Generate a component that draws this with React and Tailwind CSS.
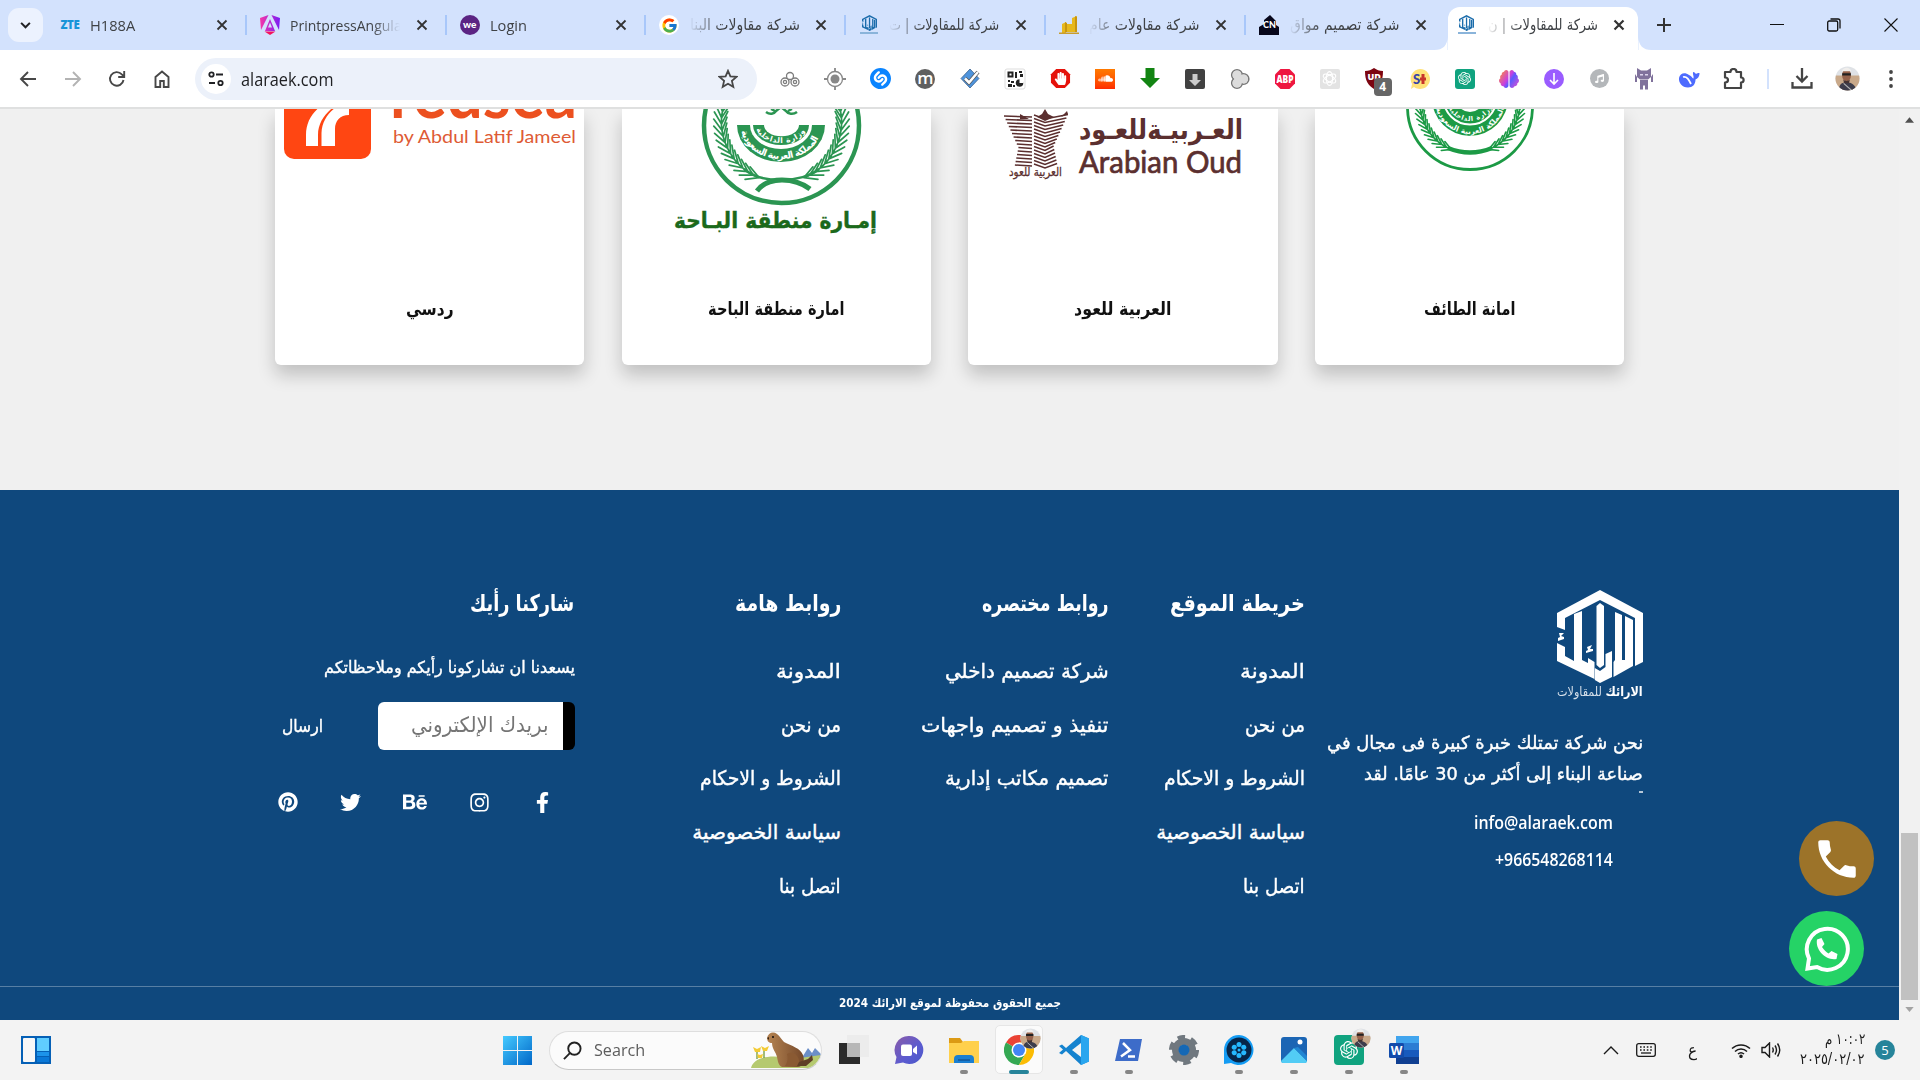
import React, { useLayoutEffect, useRef, useState } from "react";
import {
  FaFacebookF, FaInstagram, FaBehance, FaTwitter, FaPinterest,
  FaSoundcloud, FaHandPaper, FaMusic, FaBrain,
} from "react-icons/fa";
import { SiOpenai, SiShazam } from "react-icons/si";
import { FcGoogle } from "react-icons/fc";
import { MdPhone } from "react-icons/md";

/* One line of text squeezed or stretched to the width of its box. */
function Fit({ className = "", children, rtl = false }) {
  const outer = useRef(null);
  const inner = useRef(null);
  const [scale, setScale] = useState(1);
  useLayoutEffect(() => {
    const natural = inner.current.offsetWidth;
    if (natural) setScale(outer.current.clientWidth / natural);
  }, [children]);
  return (
    <div ref={outer} dir={rtl ? "rtl" : "ltr"} className={"shrink-0 whitespace-nowrap " + className}>
      <span
        ref={inner}
        className={rtl ? "inline-block origin-right" : "inline-block origin-left"}
        style={{ transform: `scaleX(${scale})` }}
      >
        {children}
      </span>
    </div>
  );
}

/* ---------- Brand mark ---------- */
function Hexagon({ className, viewBox = "0 0 86 93" }) {
  return (
    <svg viewBox={viewBox} className={className} fill="currentColor" preserveAspectRatio="none">
      <path d="M0 37V23L43 0l43 23v49l-8 4V28L43 10 8 28v12z" />
      <path d="M0 53l8 4v9l9 5V24l8-3v49l6 3v-5l6.500 4v17L0 71z" />
      <path d="M39.500 16l3.500-3 4 3v59l-4 3-3.500-3z" />
      <path d="M58 22l7 3v45h3V26l8 4v46l-19.500 11V72l1.500-2z" />
      <path d="M48.500 64l6.500-3v26l-12 6-5.200-3V78l5.200 3 5.500-4z" />
      <path d="M2 43h5l-3 3 3 1v2l-6 2v-3l2-1zM30 57l5-2-2 4 3 0v2l-7 2v-2l2-1z" />
    </svg>
  );
}

function BrandIcon() {
  return (
    <div className="flex h-5 w-5 flex-col items-center text-[#1b6cab]">
      <Hexagon className="h-[16px] w-[15px]" />
      <div className="mt-[1px] h-[2px] w-[18px] bg-[#8ab4da]" />
    </div>
  );
}

const X = ({ bold }) => (
  <svg viewBox="0 0 12 12" className="h-[12px] w-[12px]" stroke="#333" strokeWidth={bold ? 2.200 : 1.800}>
    <path d="M1.500 1.500l9 9M10.500 1.500l-9 9" />
  </svg>
);

const tabs = [
  { title: "H188A", width: "w-[45px]", icon: <span className="font-['Open_Sans'] text-[11.5px] font-extrabold tracking-[-0.3px] text-[#1794d8]">ZTE</span> },
  {
    title: "PrintpressAngula", width: "w-[112px]", fade: true,
    icon: (
      <svg viewBox="0 0 20 20" className="h-5 w-5">
        <defs><linearGradient id="ang" x1="0" x2="1"><stop offset="0" stopColor="#f637a8" /><stop offset="1" stopColor="#7a1df5" /></linearGradient></defs>
        <path d="M11.500 0L20 3l-1 12zM8.500 0L0 3l1 12zM10 4l5 12H5z" fill="url(#ang)" />
        <path d="M10 7.500l2 5H8z" fill="#d3e3fd" /><path d="M4.500 16.500h11L10 20z" fill="#f4125e" />
      </svg>
    ),
  },
  { title: "Login", width: "w-[37px]", icon: <div className="flex h-5 w-5 items-center justify-center rounded-full bg-[#5b2483] pb-[2px] font-['Lato'] text-[10px] font-black leading-none text-white">we</div> },
  { title: "شركة مقاولات البنا", ar: true, width: "w-[110px]", fade: true, icon: <div className="flex h-5 w-5 items-center justify-center rounded-full bg-white"><FcGoogle size={17} /></div> },
  { title: "شركة للمقاولات | ت", ar: true, width: "w-[110px]", fade: true, icon: <BrandIcon /> },
  {
    title: "شركة مقاولات عام", ar: true, width: "w-[110px]", fade: true,
    icon: (
      <svg viewBox="0 0 20 20" className="h-5 w-5">
        <path d="M3 9l4-2v11H3zM7 9h6v8H7zM13 3l5-2v16h-5z" fill="#e7b81d" /><path d="M6 7l2 1v9H6zM16 1l2 1v15h-2z" fill="#c8950f" /><path d="M0 17.500h20v1.500H0z" fill="#c99d2c" />
      </svg>
    ),
  },
  {
    title: "شركة تصميم مواق", ar: true, width: "w-[109px]", fade: true,
    icon: (
      <svg viewBox="0 0 20 20" className="h-5 w-5"><path d="M0 20v-8l5-3V5l6-5 6 6v4l3 2v8z" fill="#07071b" /><text x="4" y="12.500" fontFamily="Lato" fontWeight="900" fontSize="9" fill="#fff">CN</text></svg>
    ),
  },
];

function TabTitle({ t }) {
  const mask = !t.fade ? "" : t.ar
    ? "[mask-image:linear-gradient(to_right,transparent,black_32px)]"
    : "[mask-image:linear-gradient(to_left,transparent,black_28px)]";
  return (
    <div className={"ml-[10px] flex w-[111px] overflow-hidden " + (t.ar ? "justify-end " : "") + mask}>
      <Fit rtl={t.ar} className={t.width + (t.ar ? " font-['DejaVu_Sans',sans-serif] text-[15.5px]" : " font-['Open_Sans',sans-serif] text-[15px]") + " leading-[24px] text-[#3f4246]"}>{t.title}</Fit>
    </div>
  );
}

function TabStrip() {
  return (
    <div className="flex h-[50px] shrink-0 items-center bg-[#d3e2fd]">
      <div className="ml-[8px] flex h-[34px] w-[35px] shrink-0 items-center justify-center rounded-[11px] bg-[#ecf2fe]">
        <svg viewBox="0 0 12 8" className="h-[7px] w-[11px]" fill="none" stroke="#202124" strokeWidth="2.300"><path d="M1 1l5 5 5-5" /></svg>
      </div>
      <div className="ml-[4px] flex">
        {tabs.map((t, i) => (
          <div key={i} className="flex h-[24px] w-[199.8px] items-center pl-[13px]">
            <div className="flex w-5 shrink-0 justify-center">{t.icon}</div>
            <TabTitle t={t} />
            <div className="ml-[15.5px] shrink-0"><X /></div>
            {i < 6 && <div className="ml-[17px] h-5 w-[2px] shrink-0 bg-[#a8c7fa]" />}
          </div>
        ))}
      </div>
      <div className="ml-[-12px] flex h-full items-end pt-[7px]">
        <svg viewBox="0 0 14 14" className="h-[13px] w-[14px]"><path d="M14 0v14H0C9 14 14 9 14 0z" fill="#fff" /></svg>
        <div className="flex h-[43px] w-[190px] items-center rounded-t-[12px] bg-white pb-[7px] pl-[9px]">
          <BrandIcon />
          <TabTitle t={{ title: "شركة للمقاولات | ن", ar: true, fade: true, width: "w-[110px]" }} />
          <div className="ml-[15px]"><X bold /></div>
        </div>
        <svg viewBox="0 0 14 14" className="h-[13px] w-[14px]"><path d="M0 0v14h14C5 14 0 9 0 0z" fill="#fff" /></svg>
      </div>
      <svg viewBox="0 0 14 14" className="ml-[5px] h-[14px] w-[14px]" stroke="#333" strokeWidth="2"><path d="M7 0v14M0 7h14" /></svg>
      <div className="ml-auto flex items-center gap-[43px] pr-[22px]">
        <svg viewBox="0 0 14 14" className="h-[14px] w-[14px]" stroke="#111"><path d="M0 6.500h14" /></svg>
        <svg viewBox="0 0 14 14" className="h-[14px] w-[14px]" fill="none" stroke="#111" strokeWidth="1.300"><rect x=".7" y="3" width="10" height="10" rx="1.500" /><path d="M3.500 1h7.500a2 2 0 0 1 2 2v7.500" /></svg>
        <svg viewBox="0 0 14 14" className="h-[14px] w-[14px]" stroke="#111" strokeWidth="1.100"><path d="M.5 .5l13 13M13.500 .5l-13 13" /></svg>
      </div>
    </div>
  );
}

/* ---------- Toolbar ---------- */
const S = ({ children, vb = "0 0 22 22", c = "h-[22px] w-[22px]" }) => (
  <svg viewBox={vb} className={c} fill="none">{children}</svg>
);
const OCT = "M6.500 1h9L21 6.500v9L15.500 21h-9L1 15.500v-9z";

const extensions = [
  <S><g stroke="#7d7d7d" strokeWidth="1.300"><circle cx="11" cy="8" r="3.500" /><circle cx="6" cy="14" r="4" /><circle cx="16" cy="14" r="4" /><circle cx="6" cy="14" r="1.600" /><circle cx="16" cy="14" r="1.600" /></g></S>,
  <S><circle cx="11" cy="11" r="7.500" stroke="#888" strokeWidth="1.300" /><circle cx="11" cy="11" r="4.500" fill="#888" /><path d="M11 0v4M11 18v4M0 11h4M18 11h4" stroke="#888" strokeWidth="1.800" /></S>,
  <SiShazam size={21} color="#0a84ff" />,
  <div className="flex h-5 w-5 items-center justify-center rounded-full bg-[#5f5f5f] pb-[3px] font-['Open_Sans'] text-[17px] font-semibold leading-none text-white">m</div>,
  <S><path d="M11 1l9 9.500L11 20 2 10.500z" fill="#4f94dc" stroke="#38618e" strokeWidth=".8" /><path d="M6 10.500l4 4L19 4" stroke="#555" strokeWidth="4" /><path d="M6 10.500l4 4L19 4" stroke="#fff" strokeWidth="2.600" /></S>,
  <S><rect x="1" y="1" width="20" height="20" rx="2" fill="#fff" stroke="#ddd" /><g fill="#222"><path d="M3.500 3.500h6v6h-6zM11 4h2v6h-2zM15 3h3v2h-3zM16 6h3v3h-3zM4 12h2v2H4zM7 13h3v2H7zM4 16h4v3H4zM9 17h2v2H9z" /><circle cx="15.500" cy="15" r="3.800" /></g><path d="M5.500 5.500h2v2h-2z" fill="#fff" /><path d="M15.500 15v-4h4v4z" fill="#fff" /></S>,
  <div className="relative h-[21px] w-[21px]"><S c="h-[21px] w-[21px]"><path d={OCT} fill="#e5120b" /></S><FaHandPaper className="absolute left-[4px] top-[4px]" size={13} color="#fff" /></div>,
  <div className="flex h-5 w-5 items-center justify-center bg-linear-to-b from-[#ff7a00] to-[#ff2a00]"><FaSoundcloud color="#fff" size={15} /></div>,
  <S><path d="M6.500 0h9v10H21L11 20 1 10h5.500z" fill="#128412" /></S>,
  <S><rect x="1" y="1" width="20" height="20" rx="2" fill="#414141" /><path d="M8.500 6h5v6H17l-6 6-6-6h3.500z" fill="#ccc" /></S>,
  <S><g fill="#e4e4e4" stroke="#777" strokeWidth="1.600"><circle cx="8" cy="7" r="5.300" /><circle cx="14.500" cy="11" r="5.300" /><circle cx="8" cy="15" r="5.300" /></g><g fill="#dcdcdc"><circle cx="8" cy="7" r="4.600" /><circle cx="14.500" cy="11" r="4.600" /><circle cx="8" cy="15" r="4.600" /></g></S>,
  <S><path d={OCT} fill="#ee1740" /><text x="2.500" y="14.500" textLength="17" lengthAdjust="spacingAndGlyphs" fontFamily="Open Sans" fontWeight="800" fontSize="10" fill="#fff">ABP</text></S>,
  <div className="flex h-5 w-5 items-center justify-center rounded-[2px] bg-[#e3e3e3]"><S c="h-[17px] w-[17px]"><g stroke="#fff" strokeWidth="1.600"><ellipse cx="11" cy="11" rx="4" ry="9" /><ellipse cx="11" cy="11" rx="4" ry="9" transform="rotate(60 11 11)" /><ellipse cx="11" cy="11" rx="4" ry="9" transform="rotate(120 11 11)" /></g></S></div>,
  <div className="relative h-[22px] w-[22px]">
    <S><path d="M1 3c4 0 6-1 9-3 3 2 5 3 9 3 0 10-3 14-9 18C4 17 1 13 1 3z" fill="#7c0510" /><text x="3.500" y="12" fontFamily="Open Sans" fontWeight="800" fontSize="9" fill="#fff">UD</text></S>
    <div className="absolute left-[10px] top-[10px] flex h-[18px] w-[18px] items-center justify-center rounded-[4px] bg-[#666] font-['Open_Sans'] text-[12px] font-bold leading-none text-white">4</div>
  </div>,
  <S><path d="M11 1a10 10 0 1 1-6 18l-3 2 1-5A10 10 0 0 1 11 1z" fill="#ffe27a" /><text x="4" y="15.500" fontFamily="Lato" fontWeight="900" fontSize="13" fill="#3742a8">S</text><path d="M12.500 6h3v10h-3zM11 9.500h6v3h-6z" fill="#c8342b" /></S>,
  <div className="flex h-5 w-5 items-center justify-center rounded-[3px] bg-[#10a37f]"><SiOpenai color="#fff" size={13} /></div>,
  <div className="relative"><svg className="absolute h-0 w-0"><linearGradient id="brain" gradientUnits="userSpaceOnUse" x1="0" y1="60" x2="576" y2="460"><stop offset="0" stopColor="#ff8a3c" /><stop offset=".45" stopColor="#c83fe0" /><stop offset=".6" stopColor="#5a5bff" /><stop offset="1" stopColor="#e04fd0" /></linearGradient></svg><FaBrain size={20} className="fill-[url(#brain)]" /></div>,
  <S><circle cx="11" cy="11" r="10" fill="#9a5cff" /><path d="M11 5v11M7 12l4 4 4-4" stroke="#fff" strokeWidth="1.600" /></S>,
  <div className="flex h-[19px] w-[19px] items-center justify-center rounded-full bg-[#b4b7ba]"><FaMusic color="#fff" size={9} /></div>,
  <S><path d="M4 0l4 2.500h6L18 0v9l-3 2.500H7L4 9zM7 12h8v9.500h-3v-4h-2v4H7zM2 6l2 3v5H2zM20 6l-2 3v5h2z" fill="#80729c" /><path d="M7 6h3v1.500H7zM12 6h3v1.500h-3z" fill="#dcd4ec" /></S>,
  <S><path d="M1 10c1-5 6-6 10-3 3 1 3 3 4.500 3.500C16 8 14.500 6.500 15 4c1.500 0 2.500 1.500 3 2 1-1 2-1 3.500-1 0 4-2 5.500-4 6.500 0 5-3 8-7.500 8-6 0-9.500-5-9-9.500z" fill="#4d6bfe" /><path d="M5 9c4-1 6 3 8 7" stroke="#fff" strokeWidth="1.800" /></S>,
  <S><path d="M2 4h5.500c0-4 6-4 6 0H18v5.500c3.500 0 3.500 5 0 5V20H2v-5.500c4 0 4-5 0-5z" stroke="#444" strokeWidth="2.200" strokeLinejoin="round" /></S>,
];

function Avatar({ className }) {
  return (
    <svg viewBox="0 0 26 26" className={className}>
      <defs><clipPath id="av"><circle cx="13" cy="13" r="12.500" /></clipPath></defs>
      <g clipPath="url(#av)">
        <path d="M0 0h26v26H0z" fill="#dfe2e6" /><path d="M0 10h26v16H0z" fill="#c9a98a" /><path d="M4 26c0-7 3-9 8-9s10 3 10 9z" fill="#3d3d4c" />
        <ellipse cx="12" cy="9.500" rx="4.600" ry="6.500" fill="#96624b" /><path d="M7 5.500c1-5 9-5 10 0z" fill="#f0eeec" /><path d="M7.500 7.500h9V10h-9z" fill="#222" /><path d="M8.500 14c2 2 5 2 7 0l-1 4h-5z" fill="#433" />
        <path d="M9 18l9 8" stroke="#b5b5b5" strokeWidth="1.200" />
      </g>
    </svg>
  );
}

function Toolbar() {
  return (
    <div className="flex h-[59px] shrink-0 items-center border-b-2 border-[#dfe0e0] bg-white">
      <div className="ml-[19px] flex w-[152px] items-center justify-between">
        <S c="h-[18px] w-[18px]" vb="0 0 18 18"><path d="M17 9H2M9 2L2 9l7 7" stroke="#474747" strokeWidth="1.900" /></S>
        <S c="h-[18px] w-[18px]" vb="0 0 18 18"><path d="M1 9h15M9 2l7 7-7 7" stroke="#b3b3b3" strokeWidth="1.900" /></S>
        <S c="h-[18px] w-[18px]" vb="0 0 18 18"><path d="M15.500 10A6.800 6.800 0 1 1 13.800 4.300L16 6.500M16.200 1v6h-6" stroke="#474747" strokeWidth="1.900" /></S>
        <S c="h-[18px] w-[18px]" vb="0 0 18 18"><path d="M2.500 17V7L9 1.500 15.500 7v10h-4.700v-6H7.200v6z" stroke="#474747" strokeWidth="1.900" /></S>
      </div>
      <div className="ml-[24px] flex h-[42px] w-[562px] items-center rounded-full bg-[#ecf1fa] pl-[6px] pr-[19px]">
        <div className="flex h-[30px] w-[30px] items-center justify-center rounded-full bg-white">
          <S vb="0 0 16 16" c="h-[16px] w-[16px]"><g stroke="#202124" strokeWidth="1.800"><circle cx="3.500" cy="3.500" r="2.200" /><path d="M8 3.500h7M1 12h6" /><circle cx="12.500" cy="12" r="2.200" /></g></S>
        </div>
        <Fit className="ml-[10px] w-[92px] font-['Open_Sans',sans-serif] text-[17.5px] leading-[24px] text-[#202124]">alaraek.com</Fit>
        <S vb="0 0 20 20" c="ml-auto h-[20px] w-[20px]"><path d="M10 1.800l2.400 5.600 6.100.5-4.600 4 1.400 6L10 14.800l-5.300 3.100 1.400-6-4.600-4 6.100-.5z" stroke="#474747" strokeWidth="1.800" /></S>
      </div>
      <div className="ml-[11px] flex items-center">
        {extensions.map((e, i) => <div key={i} className="flex w-[44.95px] shrink-0 items-center justify-center">{e}</div>)}
      </div>
      <div className="ml-[10px] h-[20px] w-[2px] bg-[#d3e2fd]" />
      <S c="ml-[22px] h-[22px] w-[22px]"><path d="M11 0v13M5.500 8l5.500 5.500L16.500 8M1.500 14v5.500h19V14" stroke="#444" strokeWidth="2.300" /></S>
      <Avatar className="ml-[22px] h-[25px] w-[25px]" />
      <S vb="0 0 4 18" c="ml-[29px] h-[18px] w-[4px]"><g fill="#444"><circle cx="2" cy="2" r="1.900" /><circle cx="2" cy="9" r="1.900" /><circle cx="2" cy="16" r="1.900" /></g></S>
    </div>
  );
}

/* ---------- Client logos ---------- */
const AR = "'DejaVu Sans', sans-serif";

function Wreath({ cx, cy, r, leaf, from, to, step, color, width }) {
  const items = [];
  for (let a = from; a <= to; a += step) {
    const t = (a * Math.PI) / 180;
    const x = cx + r * Math.cos(t);
    const y = cy + r * Math.sin(t);
    for (const s of [-0.5, 0.5]) {
      const d = t + Math.PI / 2 + s;
      items.push(`M${x.toFixed(1)} ${y.toFixed(1)}L${(x + leaf * Math.cos(d)).toFixed(1)} ${(y + leaf * Math.sin(d)).toFixed(1)}`);
    }
  }
  const p = (a) => [cx + r * Math.cos((a * Math.PI) / 180), cy + r * Math.sin((a * Math.PI) / 180)];
  const [x0, y0] = p(from);
  const [x1, y1] = p(to);
  const d = items.join("") + `M${x0} ${y0}A${r} ${r} 0 0 1 ${x1} ${y1}`;
  return (
    <g stroke={color} strokeWidth={width} fill="none" strokeLinecap="round">
      <path d={d} />
      <path d={d} transform={`translate(${2 * cx} 0) scale(-1 1)`} />
    </g>
  );
}

const RedseaLogo = () => (
  <svg viewBox="0 0 309 140" className="h-[140px] w-[309px]">
    <rect x="9" y="-40" width="87" height="90" rx="10" fill="#ff4612" />
    <path d="M31 37V26C31 12 38 2 50-6h14C52 2 43 12 43 26v11z" fill="#fff" />
    <path d="M46.500 37V24C47 10 56 0 68-6h6V6c-9 0-14 6-14 14v17z" fill="#fff" />
    <text x="115" y="9" textLength="187" lengthAdjust="spacingAndGlyphs" fontFamily="Lato" fontWeight="700" fontSize="68" fill="#ec501f">redsea</text>
    <text x="118" y="34" textLength="183" lengthAdjust="spacingAndGlyphs" fontFamily="Lato" fontSize="17" fill="#de5b35">by Abdul Latif Jameel</text>
  </svg>
);

const BahaLogo = () => {
  const g = "#2b9552";
  return (
    <svg viewBox="0 0 309 140" className="h-[140px] w-[309px]">
      <circle cx="159.500" cy="16.500" r="77.500" fill="none" stroke={g} strokeWidth="4.500" />
      <Wreath cx={159.500} cy={13} r={60} leaf={14} from={112} to={200} step={6} color={g} width={1.700} />
      <path d="M115 16h88a44 37 0 0 1-88 0z" fill={g} />
      <path d="M128 16h62a31 24 0 0 1-62 0z" fill="#fff" />
      <path d="M131 16h56a28 20 0 0 1-56 0z" fill={g} />
      <path d="M142 16h35a17 11 0 0 1-35 0z" fill="#fff" />
      <defs><path id="b1" d="M119 18a40 32 0 0 0 80 0" /><path id="b2" d="M134 17a25 17 0 0 0 50 0" /></defs>
      <text fontFamily={AR} fontWeight="700" fontSize="9.500" fill="#fff"><textPath href="#b1" startOffset="4" textLength="98">المملكة العربية السعودية</textPath></text>
      <text fontFamily={AR} fontWeight="700" fontSize="7.500" fill="#fff"><textPath href="#b2" startOffset="3" textLength="58">وزارة الداخلية</textPath></text>
      <path d="M122 60c8 7 22 11 37 11s30-4 38-11" fill="none" stroke={g} strokeWidth="2.500" />
      <path d="M135 82c5-7 14-11 25-11s20 3 28 9" fill="none" stroke={g} strokeWidth="5" />
      <path d="M144 3c4 3 8 2 10-1l5-4 5 4c2 3 7 4 11 1M149 0l4 2M170 0l-4 2" stroke={g} strokeWidth="2.500" fill="none" />
      <text x="52" y="119" textLength="203" lengthAdjust="spacingAndGlyphs" fontFamily={AR} fontWeight="700" fontSize="22" fill="#1b691b" stroke="#1b691b" strokeWidth=".4">إمـارة منطقة البـاحة</text>
    </svg>
  );
};

const OudLogo = () => {
  const c = "#5b2f2f";
  const stripes = [];
  for (let i = 0; i < 15; i++) {
    const y = 7 + i * 3.500;
    const pinch = i < 9 ? i * 1.600 : 14.400 - (i - 9) * 0.700;
    stripes.push(`M${36 + pinch} ${y}L64 ${y + 1}M66 ${y - 1}L77 ${y + 3}L${100 - pinch} ${y - 1.500}`);
  }
  return (
    <svg viewBox="0 0 309 140" className="h-[140px] w-[309px]">
      <path d={stripes.join("")} stroke={c} strokeWidth="1.600" fill="none" />
      <path d="M69 8l5-3 3-5 3 5 6 3-9 4zM52 5l9 5h-9zM93 8l6-6 1 3z" fill={c} />
      <text x="41" y="67" textLength="53" lengthAdjust="spacingAndGlyphs" fontFamily={AR} fontSize="12" fill={c} stroke={c} strokeWidth=".3">العربية للعود</text>
      <text x="111" y="30" textLength="164" lengthAdjust="spacingAndGlyphs" fontFamily={AR} fontWeight="700" fontSize="27" fill={c}>العـربيـةللعـود</text>
      <text x="111" y="64" textLength="163" lengthAdjust="spacingAndGlyphs" fontFamily="Lato" fontWeight="400" fontSize="30" fill={c} stroke={c} strokeWidth=".7">Arabian Oud</text>
    </svg>
  );
};

const TaifLogo = () => {
  const g = "#1c9a45";
  return (
    <svg viewBox="0 0 309 140" className="h-[140px] w-[309px]">
      <circle cx="155" cy="-2" r="62.500" fill="none" stroke={g} strokeWidth="2.800" />
      <Wreath cx={155} cy={-6} r={50} leaf={10} from={112} to={200} step={6} color={g} width={1.600} />
      <path d="M133 39q22 9 44 0" fill="none" stroke={g} strokeWidth="4.500" />
      <circle cx="155" cy="-11" r="38" fill={g} />
      <circle cx="155" cy="-11" r="26.500" fill="none" stroke="#fff" strokeWidth="2" />
      <circle cx="155" cy="-11" r="14" fill="#fff" />
      <defs><path id="t1" d="M120-9a35 34 0 0 0 70 0" /><path id="t2" d="M132-9a23 21 0 0 0 46 0" /></defs>
      <text fontFamily={AR} fontWeight="700" fontSize="7.500" fill="#fff"><textPath href="#t1" startOffset="8" textLength="92">المملكة العربية السعودية</textPath></text>
      <text fontFamily={AR} fontWeight="700" fontSize="6.500" fill="#fff"><textPath href="#t2" startOffset="8" textLength="54">وزارة الداخلية</textPath></text>
    </svg>
  );
};

const clients = [
  { logo: <RedseaLogo />, name: "ردسي", w: "w-[48px]" },
  { logo: <BahaLogo />, name: "امارة منطقة الباحة", w: "w-[136px]" },
  { logo: <OudLogo />, name: "العربية للعود", w: "w-[97px]" },
  { logo: <TaifLogo />, name: "امانة الطائف", w: "w-[91px]" },
];

/* ---------- Footer ---------- */
const shared = [
  ["المدونة", "w-[65px]"],
  ["من نحن", "w-[60px]"],
  ["الشروط و الاحكام", "w-[141px]"],
  ["سياسة الخصوصية", "w-[149px]"],
  ["اتصل بنا", "w-[62px]"],
];
const short = [
  ["شركة تصميم داخلي", "w-[164px]"],
  ["تنفيذ و تصميم واجهات", "w-[188px]"],
  ["تصميم مكاتب إدارية", "w-[164px]"],
];

function LinkColumn({ title, titleWidth, links, className }) {
  return (
    <div dir="rtl" className={"shrink-0 " + className}>
      <Fit rtl className={"font-['DejaVu_Sans',sans-serif] text-[23px] font-bold leading-[36px] " + titleWidth}>{title}</Fit>
      <ul className="mt-[23px]">
        {links.map(([label, w]) => (
          <li key={label} className="flex h-[53.8px] items-center">
            <Fit rtl className={"font-['DejaVu_Sans',sans-serif] text-[20px] leading-[30px] [-webkit-text-stroke:0.4px_white] " + w}>{label}</Fit>
          </li>
        ))}
      </ul>
    </div>
  );
}

function Footer() {
  return (
    <footer className="flex h-[530px] flex-col bg-[#0f487d] text-white">
      <div className="flex h-[496px] pl-[277px] pt-[95px]">
        <div dir="rtl" className="w-[297.5px] shrink-0">
          <Fit rtl className="w-[104px] font-['DejaVu_Sans',sans-serif] text-[23px] font-bold leading-[36px]">شاركنا رأيك</Fit>
          <Fit rtl className="mt-[33px] w-[251px] font-['DejaVu_Sans',sans-serif] text-[16.5px] leading-[28px] [-webkit-text-stroke:0.4px_white]">يسعدنا ان تشاركونا رأيكم وملاحظاتكم</Fit>
          <div className="mt-[20px] flex items-center">
            <div className="flex h-[48px] w-[197px] items-center rounded-[6px] border-r-[12px] border-black bg-white pb-[2px] pr-[14px]">
              <Fit rtl className="w-[138px] font-['DejaVu_Sans',sans-serif] text-[21px] leading-[36px] text-[#757575]">بريدك الإلكتروني</Fit>
            </div>
            <Fit rtl className="mr-[54px] w-[41px] font-['DejaVu_Sans',sans-serif] text-[17.5px] leading-[30px] [-webkit-text-stroke:0.4px_white]">ارسال</Fit>
          </div>
          <div className="mt-[40px] flex w-[298px] items-center justify-between pr-[21px]">
            <div className="flex w-[22px] justify-center"><FaFacebookF size={21} /></div>
            <div className="flex w-[22px] justify-center"><FaInstagram size={21} /></div>
            <div className="flex w-[24px] justify-center"><FaBehance size={24} /></div>
            <div className="flex w-[22px] justify-center"><FaTwitter size={21} /></div>
            <div className="flex w-[22px] justify-center"><FaPinterest size={20} /></div>
          </div>
        </div>
        <LinkColumn title="روابط هامة" titleWidth="w-[106px]" links={shared} className="w-[266.500px]" />
        <LinkColumn title="روابط مختصره" titleWidth="w-[126px]" links={short} className="w-[267.500px]" />
        <LinkColumn title="خريطة الموقع" titleWidth="w-[135px]" links={shared} className="w-[196.500px]" />
        <div dir="rtl" className="w-[338px] shrink-0">
          <Hexagon className="mt-[5px] h-[93px] w-[86px]" />
          <Fit rtl className="mt-[1px] w-[86px] font-['DejaVu_Sans',sans-serif] text-[12.5px] leading-[16px] text-[#d5dfe9]"><b className="text-white">الارائك</b> للمقاولات</Fit>
          <div className="mt-[27px] h-[67px] overflow-hidden font-['DejaVu_Sans',sans-serif] text-[18px] leading-[31px] [-webkit-text-stroke:0.4px_white]">
            <Fit rtl className="w-[316px]">نحن شركة تمتلك خبرة كبيرة فى مجال في</Fit>
            <Fit rtl className="w-[279px]">صناعة البناء إلى أكثر من 30 عامًا. لقد</Fit>
            <div className="mt-[2px] h-[2px] w-[4px] bg-white/70" />
          </div>
          <div className="mt-[13px] pr-[30px]">
            <Fit className="mb-[7px] w-[139px] font-['Open_Sans',sans-serif] text-[18px] font-semibold leading-[30px]">info@alaraek.com</Fit>
            <Fit className="w-[118px] font-['Open_Sans',sans-serif] text-[18px] font-semibold leading-[30px]">+966548268114</Fit>
          </div>
        </div>
      </div>
      <div className="flex h-[34px] items-center justify-center border-t border-white/30 pb-[2px]">
        <Fit rtl className="w-[222px] font-['DejaVu_Sans',sans-serif] text-[12px] font-bold leading-[20px]">جميع الحقوق محفوظة لموقع الارائك 2024</Fit>
      </div>
    </footer>
  );
}

function Page() {
  return (
    <div className="flex h-[911px] shrink-0 bg-[#f1f1f1]">
      <main className="relative w-[1899px] shrink-0">
        <div className="flex h-[381px] gap-[37.5px] overflow-hidden bg-[#f0f0f0] pl-[275px]">
          {clients.map((c) => (
            <div key={c.name} className="flex h-[256px] w-[309.2px] shrink-0 flex-col items-center rounded-b-[6px] bg-white shadow-[0_10px_18px_rgba(0,0,0,0.2)]">
              {c.logo}
              <Fit rtl className={"mt-[46px] font-['DejaVu_Sans',sans-serif] text-[18px] font-bold leading-[28px] text-[#111] " + c.w}>{c.name}</Fit>
            </div>
          ))}
        </div>
        <Footer />
        <div className="absolute left-[1799px] top-[712px] flex h-[75px] w-[75px] items-center justify-center rounded-full bg-[#9c7329]">
          <MdPhone size={50} color="#fff" />
        </div>
        <div className="absolute left-[1789px] top-[802px] flex h-[75px] w-[75px] items-center justify-center rounded-full bg-[#25d366]">
          <svg viewBox="0 0 46 46" className="h-[46px] w-[46px]">
            <path d="M3.500 42.500l1.500-10A20.500 20.500 0 1 1 13 41z" fill="none" stroke="#fff" strokeWidth="4" />
            <path d="M13 13.500l4.500-1.500 3 6-2.500 3c2 3 4 5 6.500 6.500l3-2.500 6 3-1 5C22 35 11 24 13 13.500z" fill="#fff" />
          </svg>
        </div>
      </main>
      <div className="flex w-[21px] flex-col items-center pt-[8px]">
        <svg viewBox="0 0 10 6" className="h-[6px] w-[9px]"><path d="M5 0l5 6H0z" fill="#505050" /></svg>
        <div className="mt-[710px] h-[167px] w-[17px] shrink-0 bg-[#c1c1c1]" />
        <svg viewBox="0 0 10 6" className="mt-[7px] h-[5px] w-[9px]"><path d="M5 6l5-6H0z" fill="#a3a3a3" /></svg>
      </div>
    </div>
  );
}

/* ---------- Taskbar ---------- */
const I = ({ children }) => <svg viewBox="0 0 30 30" className="h-[30px] w-[30px]">{children}</svg>;

const apps = [
  { icon: <I><path d="M0 8h21v21H0z" fill="#2b2b2b" /><path d="M8 0h22v22H8z" fill="#ececec" /><path d="M8 8h13v14H8z" fill="#b7b7b7" /></I> },
  { icon: <I><defs><linearGradient id="chat" x1="0" y1="0" x2="1" y2="1"><stop offset="0" stopColor="#8a5ba8" /><stop offset=".6" stopColor="#5b5bd0" /><stop offset="1" stopColor="#4a57c8" /></linearGradient></defs><path d="M15 1a14 14 0 1 1-6 26.500L1 29l1.500-7A14 14 0 0 1 15 1z" fill="url(#chat)" /><rect x="7" y="9.500" width="11" height="11.500" rx="2" fill="#fff" /><path d="M19 14l4-3.500v9L19 17z" fill="#fff" /></I> },
  { dot: true, icon: <I><path d="M0 3h11l3 4h15v6H0z" fill="#dc9a14" /><path d="M0 8h12l3-2h15v22H0z" fill="#ffd04c" /><path d="M5 28v-4a4 4 0 0 1 4-4h12a4 4 0 0 1 4 4v4z" fill="#1b7fd1" /><path d="M9 24h12v2H9z" fill="#1560a6" /></I> },
  {
    active: true,
    icon: (
      <div className="relative h-[30px] w-[30px]">
        <I><circle cx="15" cy="15" r="15" fill="#fff" /><path d="M15 15L2 7.500A15 15 0 0 1 28 7.500H15z" fill="#ea4335" /><path d="M15 15L2 7.500A15 15 0 0 0 15 30l6.500-11.200z" fill="#34a853" /><path d="M15 7.500h13A15 15 0 0 1 15 30l6.500-11.200z" fill="#fbbc04" /><circle cx="15" cy="15" r="7.500" fill="#fff" /><circle cx="15" cy="15" r="6" fill="#4285f4" /></I>
        <Avatar className="absolute left-[16px] top-[-7px] h-[21px] w-[21px]" />
      </div>
    ),
  },
  { dot: true, icon: <I><path d="M22 0l8 3.500v23L22 30 7 16l-4 3.500L0 18l4-3.500L0 11l3-1.500L7 13z" fill="#1583cf" /><path d="M22 8v14l-9-7z" fill="#f3f3f3" /><path d="M22 0l8 3.500v23L22 30z" fill="#29a6ef" /></I> },
  { dot: true, icon: <I><path d="M6 4h22l-4 22H1z" fill="#3d6cc9" /><path d="M9 8l7 7-9 6.500" stroke="#fff" strokeWidth="2.500" fill="none" /><path d="M14 21.500h7" stroke="#fff" strokeWidth="2.500" /></I> },
  { icon: <I><circle cx="15" cy="15" r="8.500" fill="none" stroke="#70787f" strokeWidth="7" /><circle cx="15" cy="15" r="12.800" fill="none" stroke="#70787f" strokeWidth="4.500" strokeDasharray="7.400 6" /><circle cx="15" cy="15" r="5.500" fill="#1568b5" /></I> },
  { dot: true, icon: <I><path d="M15 0a15 15 0 1 1-8 28L0 29V15A15 15 0 0 1 15 0z" fill="#149cf4" /><circle cx="15" cy="15" r="12.500" fill="#06264a" />{[0, 60, 120, 180, 240, 300].map((a) => <circle key={a} cx="15" cy="9.500" r="2.500" fill="#25b8ff" transform={`rotate(${a} 15 15)`} />)}<circle cx="15" cy="15" r="1.500" fill="#25b8ff" /></I> },
  { dot: true, icon: <I><rect x="2" y="2" width="26" height="26" rx="3" fill="#1b65b4" /><path d="M2 26l13-13 13 13q0 2-3 2H5q-3 0-3-2z" fill="#52ccf5" /><path d="M15 13l13 13v-5L19 12z" fill="#1f86d3" /><circle cx="21" cy="7" r="2.500" fill="#fff" /></I> },
  {
    dot: true,
    icon: (
      <div className="relative flex h-[30px] w-[30px] items-center justify-center rounded-[4px] bg-[#10a37f]">
        <SiOpenai color="#fff" size={18} />
        <Avatar className="absolute left-[17px] top-[-7px] h-[20px] w-[20px]" />
      </div>
    ),
  },
  { dot: true, icon: <I><rect x="7" y="1" width="23" height="28" rx="2" fill="#2b7cd3" /><path d="M7 1h23v7H7z" fill="#41a5ee" /><path d="M7 22h23v7H7z" fill="#103f91" /><path d="M7 15h23v7H7z" fill="#185abd" /><rect x="0" y="8" width="15" height="15" rx="1.500" fill="#124bab" /><text x="1.700" y="20" fontFamily="Open Sans" fontWeight="700" fontSize="12" fill="#fff">W</text></I> },
];

function Groundhog() {
  return (
    <svg viewBox="0 0 70 36" className="h-[36px] w-[70px]">
      <defs><linearGradient id="fur" x1="0" x2="1"><stop offset="0" stopColor="#b58452" /><stop offset="1" stopColor="#76492a" /></linearGradient></defs>
      <path d="M52 24l5-8 4 5 3-5 6 6v5H52z" fill="#6c8fc8" />
      <path d="M0 36c3-12 22-14 42-9l28-4v13z" fill="#b5c96f" />
      <path d="M16 6c1-5 6-7 10-4 3 2 4 5 7 8 8 4 16 6 19 13 2 6 0 11-5 12H31c-4-2-4-6-5-10-1-5-5-8-5-14-3 0-5-2-5-5z" fill="url(#fur)" />
      <path d="M36 22c6-4 14 2 12 12H34c3-4 3-8 2-12z" fill="#8a5a33" /><path d="M48 30l9-3 4-4 1 5-7 6h-9z" fill="#5f3f27" />
      <circle cx="22" cy="5" r="1.100" fill="#1c1410" /><path d="M16 6l2-1v3z" fill="#3a2417" />
      <path d="M6 27v-7M13 26v-7" stroke="#6f9a3a" strokeWidth="1.300" />
      <path d="M2 15l4 2 4-2-1 5H4zM10 14l4 2 4-2-2 5h-4zM6 22l3 1 3-1-1 4H7z" fill="#f3cb35" />
    </svg>
  );
}

function Taskbar() {
  return (
    <div className="flex h-[60px] shrink-0 items-center bg-[#f3f3f3]">
      <svg viewBox="0 0 30 28" className="ml-[21px] h-[28px] w-[30px]">
        <path d="M0 0h30v28H0z" fill="#0560b6" /><rect x="2" y="2" width="12" height="24" rx="1" fill="#f7f7f7" /><path d="M16 2h12v13H16z" fill="#60cdff" /><path d="M16 16h12v4H16z" fill="#1c93ea" /><path d="M16 21h12v5H16z" fill="#0a78d7" />
      </svg>
      <svg viewBox="0 0 29 29" className="ml-[452px] h-[29px] w-[29px]">
        <defs><linearGradient id="win" x1="0" y1="0" x2="1" y2="1"><stop offset="0" stopColor="#45caff" /><stop offset="1" stopColor="#0067c8" /></linearGradient></defs>
        <path d="M0 0h14v14H0zM15 0h14v14H15zM0 15h14v14H0zM15 15h14v14H15z" fill="url(#win)" />
      </svg>
      <div className="ml-[17px] flex h-[39px] w-[273px] items-center overflow-hidden rounded-full border border-[#dedede] border-b-[#c8c8c8] bg-[#fbfbfb]">
        <svg viewBox="0 0 20 20" className="ml-[13px] h-[19px] w-[19px]" fill="none" stroke="#222" strokeWidth="2"><circle cx="12" cy="8" r="6.500" /><path d="M7.500 12.500L1 19" /></svg>
        <Fit className="ml-[12px] w-[51px] font-['Open_Sans',sans-serif] text-[16.5px] leading-[24px] text-[#5d5d5d]">Search</Fit>
        <div className="ml-auto"><Groundhog /></div>
      </div>
      <div className="ml-[4.500px] flex">
        {apps.map((a, i) => (
          <div key={i} className="flex h-[60px] w-[55px] flex-col items-center pt-[5px]">
            <div className={"flex h-[49px] w-[48px] items-center justify-center rounded-[5px] " + (a.active ? "border border-[#e6e6e6] bg-[#fbfbfb]" : "")}>{a.icon}</div>
            {a.active && <div className="mt-[-4px] h-[4px] w-[20px] shrink-0 rounded-full bg-[#26849a]" />}
            {a.dot && <div className="mt-[-4px] h-[4px] w-[8px] shrink-0 rounded-full bg-[#868686]" />}
          </div>
        ))}
      </div>
      <div className="ml-auto flex items-center pr-[25px] text-[#1a1a1a]">
        <svg viewBox="0 0 16 9" className="h-[9px] w-[16px]" fill="none" stroke="#1a1a1a" strokeWidth="1.400"><path d="M1 8l7-7 7 7" /></svg>
        <svg viewBox="0 0 20 14" className="ml-[17px] h-[14px] w-[20px]" fill="none" stroke="#1a1a1a" strokeWidth="1.300"><rect x=".7" y=".7" width="18.600" height="12.600" rx="2" /><path d="M4 4h12M4 7h12" strokeDasharray="1.600 1.800" /><path d="M5 10h10" /></svg>
        <Fit rtl className="ml-[32px] w-[9px] font-['DejaVu_Sans',sans-serif] text-[17px] leading-[24px]">ع</Fit>
        <svg viewBox="0 0 20 15" className="ml-[34px] h-[15px] w-[20px]" fill="none" stroke="#1a1a1a" strokeWidth="1.500"><path d="M1 5.500a13 13 0 0 1 18 0M4 8.500a8.500 8.500 0 0 1 12 0M7 11a4.500 4.500 0 0 1 6 0" /><circle cx="10" cy="13.300" r="1" fill="#1a1a1a" /></svg>
        <svg viewBox="0 0 20 16" className="ml-[10px] h-[16px] w-[20px]" fill="none" stroke="#1a1a1a" strokeWidth="1.400"><path d="M1 5.500h3L8.500 1v14L4 10.500H1zM11.500 5.500q1.500 2.500 0 5M14 3.500q3 4.500 0 9M16.500 1.500q4.500 6.500 0 13" /></svg>
        <div dir="rtl" className="ml-[19px] mt-[-2px] flex w-[65px] flex-col font-['DejaVu_Sans',sans-serif] text-[15px] leading-[20px]">
          <Fit rtl className="w-[40px]">١٠:٠٢ م</Fit>
          <Fit rtl className="w-[65px]">٢٠٢٥/٠٢/٠٢</Fit>
        </div>
        <div className="ml-[10px] flex h-[20px] w-[20px] items-center justify-center rounded-full bg-[#26849a] font-['Open_Sans',sans-serif] text-[13px] leading-none text-white">5</div>
      </div>
    </div>
  );
}

export default function App() {
  return (
    <div className="flex h-[1080px] w-[1920px] flex-col overflow-hidden bg-white">
      <TabStrip />
      <Toolbar />
      <Page />
      <Taskbar />
    </div>
  );
}
